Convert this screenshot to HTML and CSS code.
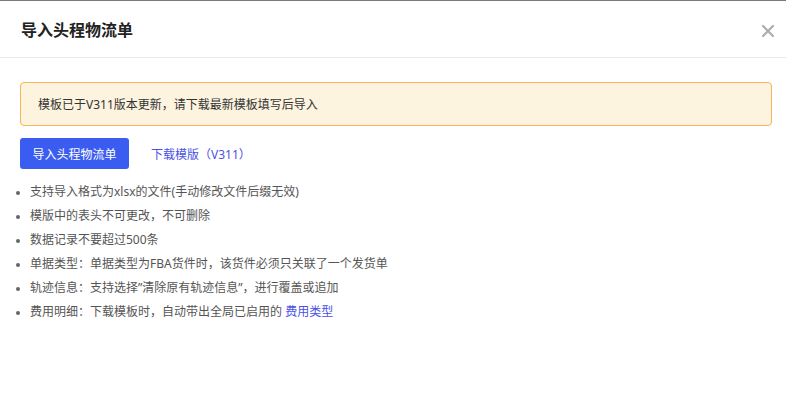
FILE: index.html
```html
<!DOCTYPE html>
<html lang="zh-CN">
<head>
    <meta charset="UTF-8">
    <title>导入头程物流单</title>
    <link rel="stylesheet" href="styles.css">
</head>
<body>
<div class="modal">
    <div class="modal-header">
        <span class="modal-title">导入头程物流单</span>
        <svg class="modal-close" width="12" height="12" viewBox="0 0 12 12">
            <path d="M1 1L11 11M11 1L1 11" stroke="#a8adb5" stroke-width="2.2" stroke-linecap="round"/>
        </svg>
    </div>
    <div class="modal-body">
        <div class="alert">模板已于V311版本更新，请下载最新模板填写后导入</div>
        <div class="actions">
            <button class="btn-primary">导入头程物流单</button>
            <a class="link" href="#">下载模版（V311）</a>
        </div>
        <ul class="tips">
            <li>支持导入格式为xlsx的文件(手动修改文件后缀无效)</li>
            <li>模版中的表头不可更改，不可删除</li>
            <li>数据记录不要超过500条</li>
            <li>单据类型：单据类型为FBA货件时，该货件必须只关联了一个发货单</li>
            <li>轨迹信息：支持选择”清除原有轨迹信息”，进行覆盖或追加</li>
            <li>费用明细：下载模板时，自动带出全局已启用的 <a class="link" href="#">费用类型</a></li>
        </ul>
    </div>
</div>
</body>
</html>
```

FILE: styles.css
```css
html, body {
    margin: 0;
    padding: 0;
    background: #fff;
}

body {
    font-family: "Noto Sans", "Noto Sans CJK SC", sans-serif;
    font-size: 12px;
    color: #333;
    border-top: 1px solid #7a7a7a;
}

.modal-header {
    height: 56px;
    display: flex;
    align-items: center;
    justify-content: space-between;
    padding: 0 12px 0 21px;
    border-bottom: 1px solid #e8e8e8;
}

.modal-title {
    font-family: "Noto Sans CJK SC", sans-serif;
    font-size: 16px;
    font-weight: 700;
    color: #222;
}

.modal-close {
    margin-top: 3px;
}

.modal-body {
    padding: 24px 14px 0 20px;
}

.alert {
    height: 42px;
    display: flex;
    align-items: center;
    padding-left: 17px;
    background: #fdf4df;
    border: 1px solid #f6b455;
    border-radius: 4px;
    color: #333;
}

.actions {
    display: flex;
    align-items: center;
    margin-top: 12px;
}

.btn-primary {
    width: 109px;
    height: 31px;
    border: none;
    border-radius: 3px;
    background: #3a5cf1;
    color: #fff;
    font-family: inherit;
    font-size: 12px;
    padding: 0;
}

.link {
    color: #4a52e6;
    text-decoration: none;
}

.actions .link {
    margin-left: 22px;
}

.tips {
    margin: 11px 0 0;
    padding-left: 10px;
    color: #555;
}

.tips li {
    line-height: 24px;
}

.tips li::marker {
    color: #666;
    font-size: 10px;
}
```
